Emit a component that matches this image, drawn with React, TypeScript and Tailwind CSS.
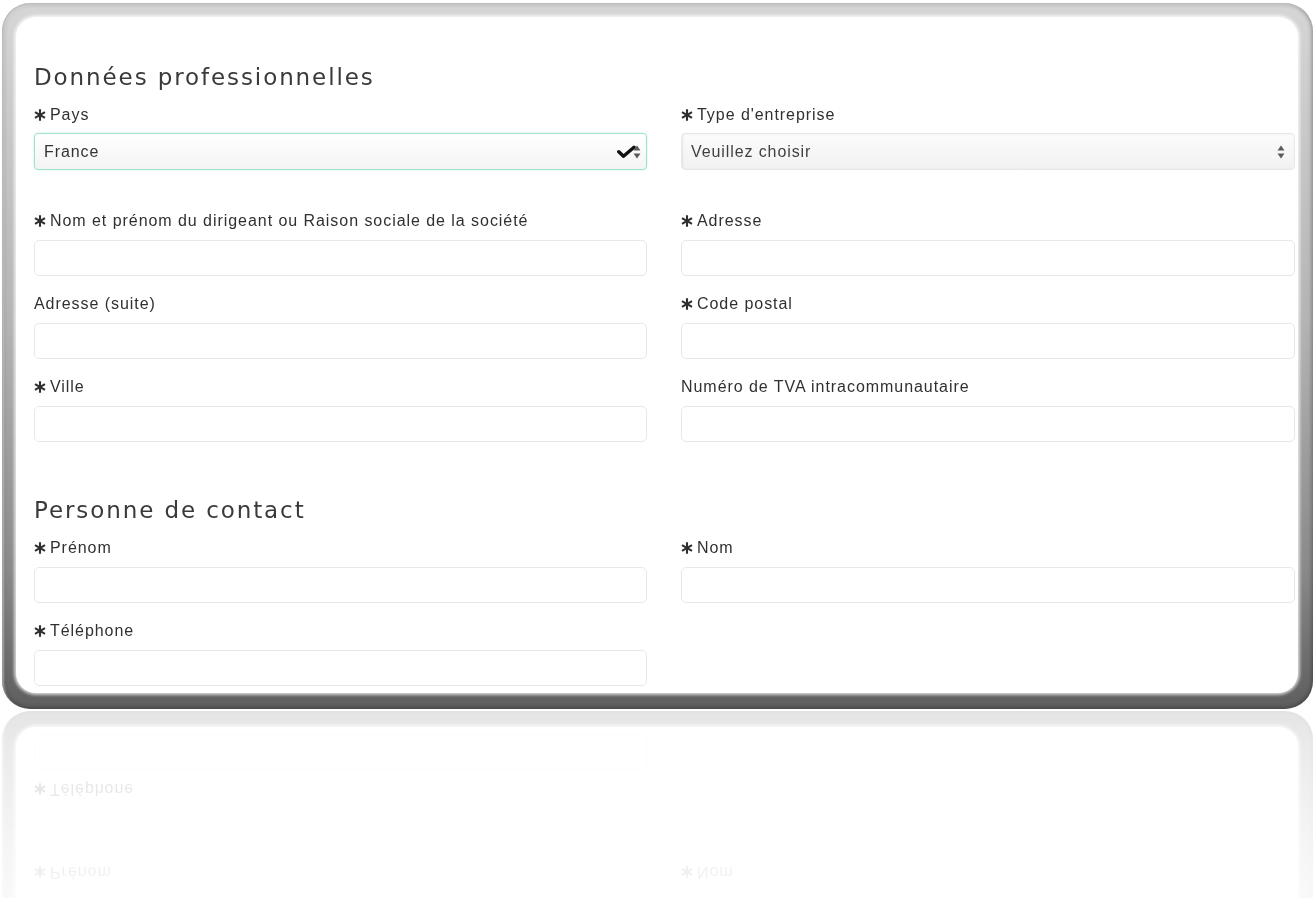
import React from "react";

const Star = () => (
  <svg width="12" height="12" viewBox="0 0 12 12" className="shrink-0">
    <g stroke="#2f2f2f" strokeWidth="2.1">
      <line x1="6" y1="0.3" x2="6" y2="11.7" />
      <line x1="1" y1="3.1" x2="11" y2="8.9" />
      <line x1="1" y1="8.9" x2="11" y2="3.1" />
    </g>
  </svg>
);

const Arrows = () => (
  <svg width="8" height="14" viewBox="0 0 8 14" className="shrink-0">
    <path d="M4 0.5 L7.5 5.5 L0.5 5.5 Z" fill="#5a5a5a" />
    <path d="M4 13.5 L7.5 8.5 L0.5 8.5 Z" fill="#5a5a5a" />
  </svg>
);

const Check = () => (
  <svg width="22" height="14" viewBox="0 0 22 14" className="shrink-0">
    <path d="M1.8 6.8 L6.5 11.3 L17 2.2" fill="none" stroke="#111" strokeWidth="3.4" strokeLinecap="round" strokeLinejoin="round" />
  </svg>
);

function Label({ text, required }: { text: string; required?: boolean }) {
  return (
    <div className="flex h-[20px] items-center gap-[4px] text-[16px] leading-[20px] tracking-[0.95px] text-[#303030]">
      {required && <Star />}
      <span>{text}</span>
    </div>
  );
}

function TextField({ label, required }: { label: string; required?: boolean }) {
  return (
    <div className="flex flex-col">
      <Label text={label} required={required} />
      <div className="mt-[9px] h-[36px] rounded-[5px] border border-[#e5e8ec] bg-white" />
    </div>
  );
}

function Heading({ text }: { text: string }) {
  return (
    <h2 className="h-[28px] font-['DejaVu_Sans',sans-serif] text-[23px] leading-[28px] tracking-[1.9px] text-[#3a3a3a]">
      {text}
    </h2>
  );
}

export default function App() {
  return (
    <div className="min-h-[898px] bg-white font-['Liberation_Sans',Arial,sans-serif]">
      <div className="ml-[2px] pt-[3px]">
        <div className="h-[706px] w-[1311px] rounded-[28px] bg-[linear-gradient(180deg,#d6d6d6_0%,#b4b4b4_45%,#8a8a8a_80%,#5e5e5e_100%)] pb-[16px] pl-[14px] pr-[15px] pt-[14px] shadow-[inset_0_0_4px_1px_rgba(0,0,0,0.35),inset_2px_2px_2px_rgba(255,255,255,0.6)] [-webkit-box-reflect:below_2px_linear-gradient(to_bottom,transparent_55%,rgba(0,0,0,0.08)_80%,rgba(0,0,0,0.16)_100%)]">
          <div className="h-full w-full overflow-hidden rounded-[20px] bg-white pl-[18px] pr-[3px] pt-[46px] shadow-[0_0_3px_2px_rgba(255,255,255,0.7)]">
            <Heading text="Données professionnelles" />
            <div className="mt-[14px] grid grid-cols-[613px_614px] gap-x-[34px]">
              <div className="flex flex-col">
                <Label text="Pays" required />
                <div className="mt-[8px] flex h-[37px] items-center justify-between rounded-[4px] border border-[#9fe3c6] bg-[linear-gradient(180deg,#ffffff_0%,#f4f4f4_100%)] pl-[9px] pr-[5px] text-[16px] tracking-[0.9px] text-[#333333] shadow-[0_0_2px_rgba(120,220,180,0.5)]">
                  <span>France</span>
                  <div className="flex items-center">
                    <Check />
                    <div className="-ml-[6px]">
                      <Arrows />
                    </div>
                  </div>
                </div>
              </div>
              <div className="flex flex-col">
                <Label text="Type d'entreprise" required />
                <div className="mt-[8px] flex h-[37px] items-center justify-between rounded-[4px] border border-[#e6e8ec] bg-[linear-gradient(180deg,#fbfbfb_0%,#f2f2f2_100%)] pl-[9px] pr-[9px] text-[16px] tracking-[0.9px] text-[#3f3f3f] shadow-[inset_1px_0_2px_rgba(0,0,0,0.08)]">
                  <span>Veuillez choisir</span>
                  <Arrows />
                </div>
              </div>
            </div>
            <div className="mt-[41px] grid grid-cols-[613px_614px] gap-x-[34px] gap-y-[18px]">
              <TextField label="Nom et prénom du dirigeant ou Raison sociale de la société" required />
              <TextField label="Adresse" required />
              <TextField label="Adresse (suite)" />
              <TextField label="Code postal" required />
              <TextField label="Ville" required />
              <TextField label="Numéro de TVA intracommunautaire" />
            </div>
            <div className="mt-[54px]">
              <Heading text="Personne de contact" />
            </div>
            <div className="mt-[14px] grid grid-cols-[613px_614px] gap-x-[34px] gap-y-[18px]">
              <TextField label="Prénom" required />
              <TextField label="Nom" required />
              <TextField label="Téléphone" required />
            </div>
          </div>
        </div>
      </div>
    </div>
  );
}
